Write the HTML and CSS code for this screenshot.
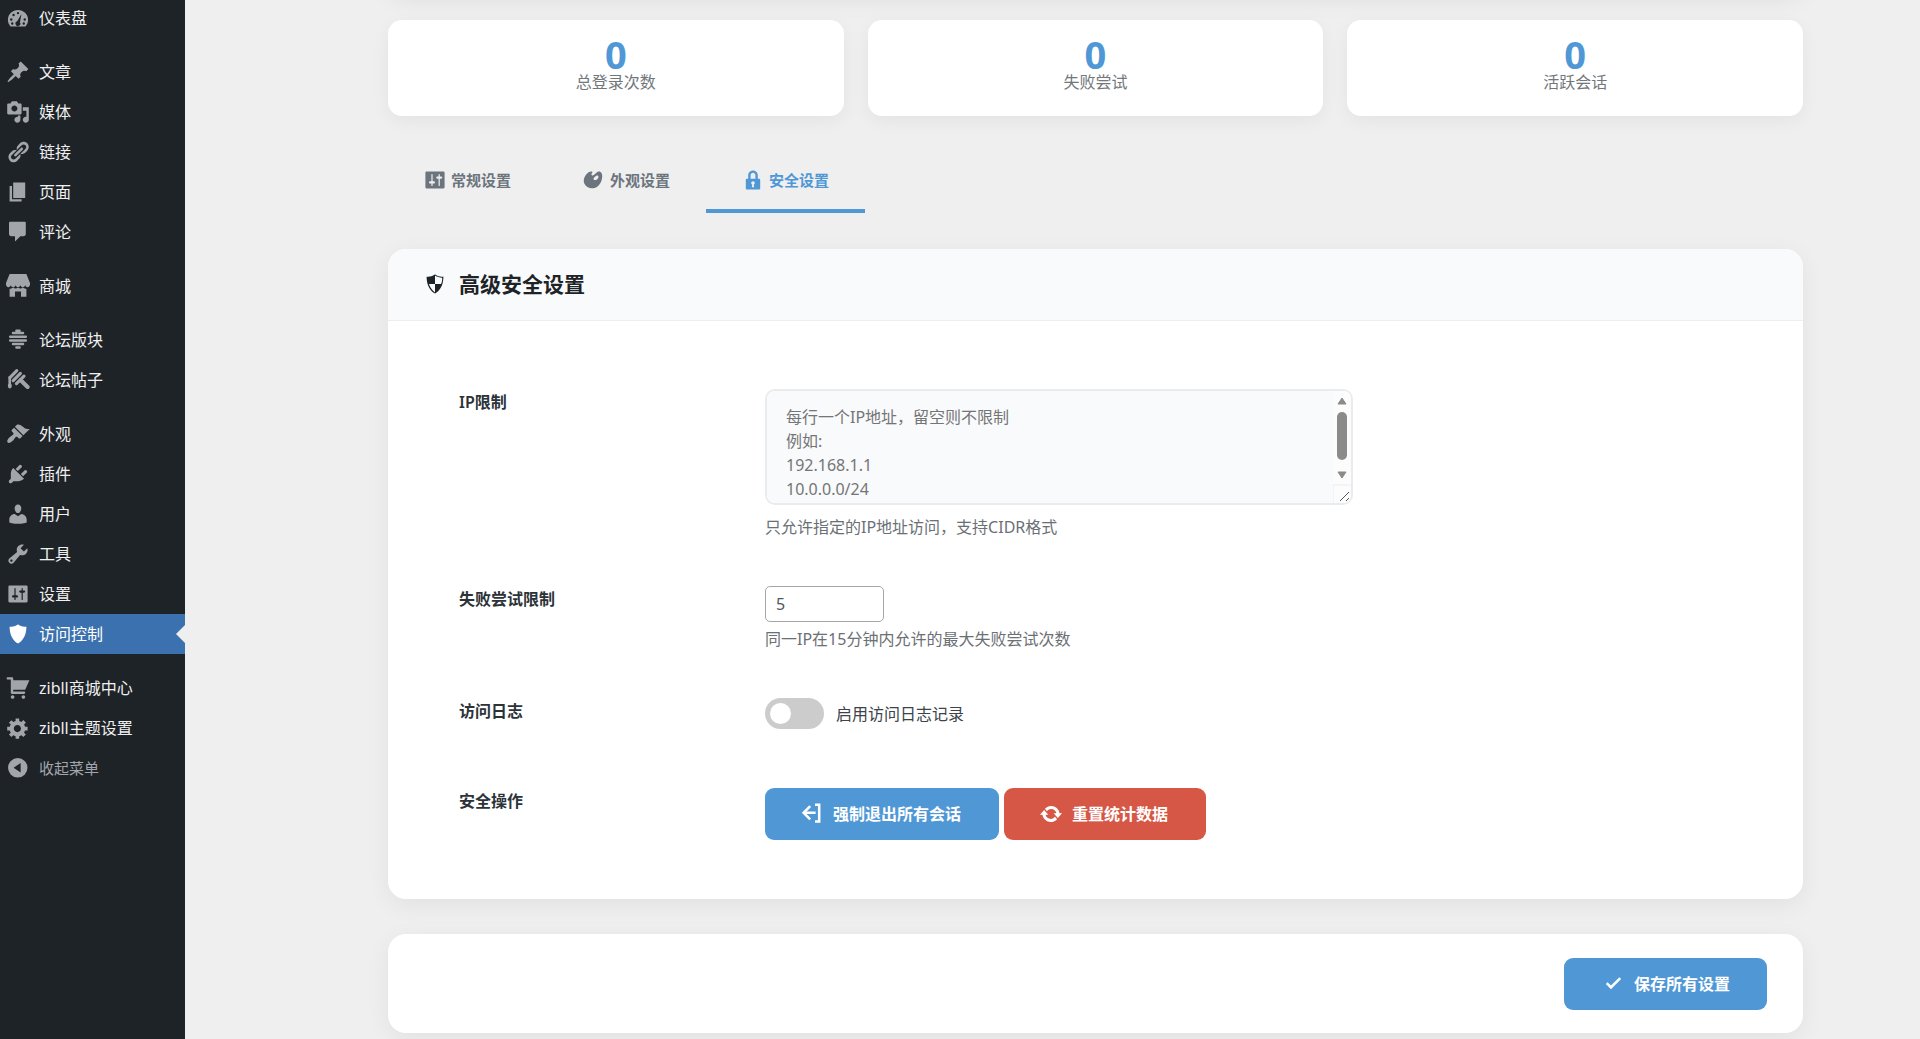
FILE: index.html
```html
<!DOCTYPE html>
<html lang="zh-CN">
<head>
  <meta charset="UTF-8" />
  <meta name="viewport" content="width=device-width, initial-scale=1.0" />
  <title>访问控制</title>
  <link rel="stylesheet" href="styles.css">
</head>
<body>
  <!-- Admin menu -->
  <nav class="sidebar">
    <ul class="menu">
      <li><a href="#"><svg viewBox="0 0 20 20"><path fill-rule="evenodd" d="M3.8 17C2.4 15.600 1.600 13.600 1.600 11.400 1.600 7 5.400 3.400 10 3.400s8.400 3.600 8.400 8c0 2.200-.8 4.200-2.200 5.600zM9 5.900a1 1 0 1 0 2 0 1 1 0 1 0-2 0zM5.300 7.500a1 1 0 1 0 2 0 1 1 0 1 0-2 0zM3.400 11.200a1 1 0 1 0 2 0 1 1 0 1 0-2 0zM14.600 11.200a1 1 0 1 0 2 0 1 1 0 1 0-2 0zM4.200 14.600a1 1 0 1 0 2 0 1 1 0 1 0-2 0zM13.800 14.600a1 1 0 1 0 2 0 1 1 0 1 0-2 0zM12.900 6.700l-3.600 6.100a2 2 0 1 0 2.300.8z"/></svg>仪表盘</a></li>
      <li class="gap"><a href="#"><svg viewBox="0 0 20 20"><path d="M10.44 3.02l1.82-1.82 6.36 6.35-1.83 1.82c-1.05-.68-2.48-.57-3.41.36l-.75.75c-.92.93-1.04 2.35-.35 3.41l-1.83 1.82-2.41-2.41-2.8 2.79c-.42.42-3.38 2.71-3.8 2.29s1.86-3.39 2.28-3.81l2.79-2.79L4.1 9.36l1.83-1.82c1.05.69 2.48.57 3.4-.36l.75-.75c.93-.92 1.05-2.35.36-3.41z"/></svg>文章</a></li>
      <li><a href="#"><svg viewBox="0 0 20 20"><path d="M13 11V4c0-.55-.45-1-1-1h-1.670L9 1H5L3.670 3H2c-.55 0-1 .45-1 1v7c0 .55.45 1 1 1h10c.55 0 1-.45 1-1zM7 4.500c1.380 0 2.500 1.120 2.500 2.500S8.380 9.500 7 9.500 4.500 8.380 4.500 7 5.620 4.500 7 4.500zM14 6h5v10.500c0 1.380-1.120 2.500-2.500 2.500S14 17.880 14 16.500s1.120-2.500 2.500-2.500c.17 0 .34.02.5.05V9h-3V6zm-4 8.050V13h2v3.500c0 1.380-1.120 2.500-2.500 2.500S7 17.880 7 16.500 8.120 14 9.500 14c.17 0 .34.02.5.05z"/></svg>媒体</a></li>
      <li><a href="#"><svg viewBox="0 0 20 20"><path d="M17.74 2.76c1.68 1.69 1.68 4.41 0 6.1l-1.53 1.52c-1.12 1.12-2.7 1.47-4.14 1.09l2.62-2.61.76-.77.76-.76c.84-.84.84-2.2 0-3.04-.84-.85-2.2-.85-3.04 0l-.77.76-3.38 3.38c-.37-1.44-.02-3.02 1.1-4.14l1.52-1.53c1.69-1.68 4.42-1.68 6.1 0zM8.59 13.43l5.34-5.34c.42-.42.42-1.1 0-1.52-.44-.43-1.13-.39-1.53 0l-5.33 5.34c-.42.42-.42 1.1 0 1.52.44.43 1.13.39 1.52 0zm-.76 2.29l4.14-4.15c.38 1.44.03 3.02-1.09 4.14l-1.52 1.53c-1.69 1.68-4.41 1.68-6.1 0-1.68-1.68-1.68-4.42 0-6.1l1.53-1.52c1.12-1.12 2.7-1.47 4.14-1.1l-4.14 4.15c-.85.84-.85 2.2 0 3.05.84.84 2.2.84 3.04 0z"/></svg>链接</a></li>
      <li><a href="#"><svg viewBox="0 0 20 20"><path d="M6 15V2h10v13H6zm-1 1h8v2H3V5h2v11z"/></svg>页面</a></li>
      <li><a href="#"><svg viewBox="0 0 20 20"><path d="M3.500 1.500h12c.6 0 1 .4 1 1v9c0 1-.6 2-2 2h-2.500l-4.500 4.500v-4.500h-3c-1.300 0-2-1-2-2v-9c0-.6.4-1 1-1z"/></svg>评论</a></li>
      <li class="gap"><a href="#"><svg viewBox="0 0 20 20"><path d="M3 0h14l3 7.500v1.300c0 1.200-.9 2.200-2 2.200s-2-.9-2-1.800c0 .9-.9 1.800-2 1.800s-2-.9-2-1.800c0 .9-.9 1.800-2 1.800s-2-.9-2-1.800c0 .9-.9 1.800-2 1.800s-2-.9-2-1.800c0 .9-.9 1.800-2 1.800s-2-1-2-2.200V7.500zM3 12.200c1.200.2 2.200-.2 3-.9 1.200 1.100 2.800 1.100 4 0 1.200 1.100 2.800 1.100 4 0 .8.700 1.800 1.100 3 .9V19h-4.500V14.500h-5V19H3z"/></svg>商城</a></li>
      <li class="gap"><a href="#"><svg viewBox="0 0 20 20"><path d="M8.700 2.200h2.600M5.800 4.100h8.400M3.500 7.300h13M3.500 10.400h13M5.800 13.400h8.400M8.700 16.200h2.600" fill="none" stroke="currentColor" stroke-width="2.100" stroke-linecap="round"/></svg>论坛版块</a></li>
      <li><a href="#"><svg viewBox="0 0 20 20"><path d="M9 2.200L3.300 8M12 4.500L6 10.500M15 6.800L8.700 13" fill="none" stroke="currentColor" stroke-width="2.600" stroke-linecap="round"/><path d="M12.300 10.200L18 15.800" fill="none" stroke="currentColor" stroke-width="3.400" stroke-linecap="round"/><path d="M2 7h2.200v6c1 1.600.8 4-.9 4-1.600 0-2.200-2-1.300-3.800z"/></svg>论坛帖子</a></li>
      <li class="gap"><a href="#"><svg viewBox="0 0 20 20"><path d="M14.48 11.06L7.41 3.99l1.5-1.5c.5-.56 2.3-.47 3.51.32 1.21.8 1.43 1.28 2.91 2.1 1.18.64 2.45 1.26 4.45.85zm-.71.71L6.7 4.7 4.93 6.47c-.39.39-.39 1.02 0 1.41l1.06 1.06c.39.39.39 1.03 0 1.42-.6.6-1.43 1.11-2.21 1.69-.35.26-.7.53-1.01.84C1.43 14.23.4 16.08 1.4 17.07c.99 1 2.84-.03 4.18-1.36.31-.31.58-.66.85-1.02.57-.78 1.08-1.61 1.69-2.21.39-.39 1.02-.39 1.41 0l1.06 1.06c.39.39 1.02.39 1.41 0z"/></svg>外观</a></li>
      <li><a href="#"><svg viewBox="0 0 20 20"><path d="M13.11 4.36L9.87 7.6 8 5.73l3.24-3.24c.35-.34 1.05-.2 1.56.32.52.51.66 1.21.31 1.55zm-8 1.77l.91-1.12 9.01 9.01-1.19.84c-.71.71-2.63 1.16-3.82 1.16H6.14L4.9 17.26c-.59.59-1.54.59-2.12 0-.59-.58-.59-1.53 0-2.12l1.24-1.24v-3.88c0-1.13.4-3.19 1.09-3.89zm7.26 3.97l3.24-3.24c.34-.35 1.04-.21 1.55.31.52.51.66 1.21.31 1.55l-3.24 3.25z"/></svg>插件</a></li>
      <li><a href="#"><svg viewBox="0 0 20 20"><path d="M10 9.250c-2.270 0-2.730-3.440-2.730-3.440C7 4.020 7.820 2 9.970 2c2.160 0 2.980 2.020 2.710 3.810 0 0-.41 3.440-2.680 3.440zm0 2.570L12.720 10c2.390 0 4.520 2.330 4.520 4.530v2.490s-3.650 1.130-7.240 1.130c-3.650 0-7.240-1.130-7.240-1.130v-2.490c0-2.250 1.940-4.480 4.470-4.480z"/></svg>用户</a></li>
      <li><a href="#"><svg viewBox="0 0 20 20"><path d="M16.68 9.77c-1.34 1.34-3.3 1.67-4.95.99l-5.41 6.52c-.99.99-2.59.99-3.58 0s-.99-2.59 0-3.57l6.52-5.42c-.68-1.65-.35-3.61.99-4.95 1.28-1.28 3.12-1.62 4.72-1.06l-2.89 2.89 2.82 2.82 2.86-2.87c.53 1.58.18 3.39-1.08 4.65zM3.81 16.21c.4.39 1.04.39 1.43 0 .4-.4.4-1.04 0-1.43-.39-.4-1.03-.4-1.43 0-.39.39-.39 1.03 0 1.43z"/></svg>工具</a></li>
      <li><a href="#"><svg viewBox="0 0 20 20"><path d="M18 16V4c0-.55-.45-1-1-1H3c-.55 0-1 .45-1 1v12c0 .55.45 1 1 1h14c.55 0 1-.45 1-1zM8 11h1c.55 0 1 .45 1 1s-.45 1-1 1H8v1.5c0 .28-.22.5-.5.5s-.5-.22-.5-.5V13H6c-.55 0-1-.45-1-1s.45-1 1-1h1V5.5c0-.28.22-.5.5-.5s.5.22.5.5V11zm5-2h-1c-.55 0-1-.45-1-1s.45-1 1-1h1V5.5c0-.28.22-.5.5-.5s.5.22.5.5V7h1c.55 0 1 .45 1 1s-.45 1-1 1h-1v5.5c0 .28-.22.5-.5.5s-.5-.22-.5-.5V9z"/></svg>设置</a></li>
      <li><a href="#" class="current"><svg viewBox="0 0 20 20"><path d="M10 2s3 2 7 2c0 11-7 14-7 14S3 15 3 4c4 0 7-2 7-2z"/></svg>访问控制</a></li>
      <li class="gap"><a href="#"><svg viewBox="0 0 20 20"><path d="M6 13h9c.55 0 1 .45 1 1s-.45 1-1 1H5c-.55 0-1-.45-1-1V3H1.500C.9 3 .5 2.600.5 2s.4-1 1-1H5c.55 0 1 .45 1 1v1.500h13.500L16 11.500H6zm-.5 3c.83 0 1.500.67 1.500 1.500S6.330 19 5.500 19 4 18.330 4 17.500 4.670 16 5.500 16zm9 0c.83 0 1.500.67 1.500 1.500s-.67 1.500-1.500 1.500-1.500-.67-1.500-1.500.67-1.500 1.500-1.500z"/></svg>zibll商城中心</a></li>
      <li><a href="#"><svg viewBox="0 0 20 20"><path d="M18 12h-2.180c-.17.7-.44 1.350-.81 1.930l1.540 1.540-2.100 2.100-1.540-1.540c-.58.36-1.230.63-1.910.79V19H8v-2.180c-.68-.16-1.330-.43-1.910-.79l-1.540 1.540-2.120-2.120 1.540-1.540c-.36-.58-.63-1.230-.79-1.910H1V9.030h2.170c.16-.7.44-1.350.8-1.940L2.430 5.550l2.100-2.100 1.540 1.540c.58-.37 1.240-.64 1.930-.81V2h3v2.180c.68.16 1.330.43 1.910.79l1.540-1.540 2.120 2.120-1.540 1.540c.36.59.64 1.240.8 1.940H18V12zm-8.500 1.500c1.660 0 3-1.340 3-3s-1.340-3-3-3-3 1.340-3 3 1.340 3 3 3z"/></svg>zibll主题设置</a></li>
      <li><button type="button" class="collapse"><svg viewBox="0 0 20 20"><path fill-rule="evenodd" d="M9.800 1.700a8.100 8.100 0 1 0 0 16.200 8.100 8.100 0 0 0 0-16.200zM12.200 5.800v8L6.300 9.800z"/></svg>收起菜单</button></li>
    </ul>
  </nav>

  <main class="content">
    <div class="wrap">
      <div class="page-header"></div>

      <!-- Stats -->
      <section class="stats">
        <div class="stat-card">
          <div class="stat-number">0</div>
          <div class="stat-label">总登录次数</div>
        </div>
        <div class="stat-card">
          <div class="stat-number">0</div>
          <div class="stat-label">失败尝试</div>
        </div>
        <div class="stat-card">
          <div class="stat-number">0</div>
          <div class="stat-label">活跃会话</div>
        </div>
      </section>

      <!-- Tabs -->
      <nav class="tabs">
        <a href="#general" class="tab"><svg viewBox="0 0 20 20"><path d="M18 16V4c0-.55-.45-1-1-1H3c-.55 0-1 .45-1 1v12c0 .55.45 1 1 1h14c.55 0 1-.45 1-1zM8 11h1c.55 0 1 .45 1 1s-.45 1-1 1H8v1.5c0 .28-.22.5-.5.5s-.5-.22-.5-.5V13H6c-.55 0-1-.45-1-1s.45-1 1-1h1V5.5c0-.28.22-.5.5-.5s.5.22.5.5V11zm5-2h-1c-.55 0-1-.45-1-1s.45-1 1-1h1V5.5c0-.28.22-.5.5-.5s.5.22.5.5V7h1c.55 0 1 .45 1 1s-.45 1-1 1h-1v5.5c0 .28-.22.5-.5.5s-.5-.22-.5-.5V9z"/></svg>常规设置</a>
        <a href="#appearance" class="tab"><svg viewBox="0 0 20 20"><path d="M8.55 3.06c1.01.34-1.95 2.01-.1 3.13 1.04.63 3.31-2.22 4.45-2.86.97-.54 2.67-.65 3.53 1.23 1.09 2.38.14 8.57-3.79 11.06-3.97 2.5-8.97 1.23-10.7-2.66-2.01-4.53 3.12-11.09 6.61-9.9zm1.21 6.45c.73 1.64 4.7-.5 3.79-2.8-.59-1.49-4.48 1.25-3.79 2.8z"/></svg>外观设置</a>
        <a href="#security" class="tab active"><svg viewBox="0 0 20 20"><path d="M14 9h1c.55 0 1 .45 1 1v7c0 .55-.45 1-1 1H5c-.55 0-1-.45-1-1v-7c0-.55.45-1 1-1h1V6c0-2.21 1.79-4 4-4s4 1.79 4 4v3zm-2 0V6c0-1.1-.9-2-2-2s-2 .9-2 2v3h4zm-1 7l-.36-2.15c.51-.24.86-.75.86-1.35 0-.83-.67-1.5-1.5-1.5s-1.5.67-1.5 1.5c0 .6.35 1.11.86 1.35L9 16h2z"/></svg>安全设置</a>
      </nav>

      <form>
        <!-- Security settings -->
        <section class="card" id="security">
          <h2 class="card-title"><svg viewBox="0 0 20 20"><path d="M10 2s3 2 7 2c0 11-7 14-7 14S3 15 3 4c4 0 7-2 7-2zm0 8h5s1-1 1-5c0 0-5-1-6-2v7H5c1 4 5 7 5 7v-7z"/></svg>高级安全设置</h2>
          <div class="card-body">
            <div class="row">
              <label class="row-label" for="ipLimit">IP限制</label>
              <div class="field">
                <div class="ip-wrap">
                  <textarea id="ipLimit" class="ip-box" placeholder="每行一个IP地址，留空则不限制&#10;例如:&#10;192.168.1.1&#10;10.0.0.0/24"></textarea>
                  <svg class="scrollbar" viewBox="0 0 18 112" aria-hidden="true">
                    <path d="M0 0h10q8 0 8 8v96q0 8-8 8H0z" fill="#fcfcfc"/>
                    <path d="M9 7l4 6H5zM9 87l4-6H5z" fill="#8b8b8b" stroke="#8b8b8b" stroke-linejoin="round"/>
                    <rect x="4" y="21" width="10" height="48" rx="5" fill="#8b8b8b"/>
                    <path d="M0 112V94h18" fill="none" stroke="#e9ecef"/>
                    <path d="M7 110l9-9M13 110l3-3" fill="none" stroke="#555"/>
                  </svg>
                </div>
                <p class="help">只允许指定的IP地址访问，支持CIDR格式</p>
              </div>
            </div>
            <div class="row">
              <label class="row-label" for="maxFail">失败尝试限制</label>
              <div class="field">
                <input type="number" id="maxFail" class="number" value="5" min="1">
                <p class="help near">同一IP在15分钟内允许的最大失败尝试次数</p>
              </div>
            </div>
            <div class="row row-toggle">
              <span class="row-label">访问日志</span>
              <label class="toggle"><input type="checkbox" class="switch">启用访问日志记录</label>
            </div>
            <div class="row">
              <span class="row-label">安全操作</span>
              <div class="actions">
                <button type="button" class="btn"><svg viewBox="0 0 20 20"><path d="M8.500 3.500L3 9l5.500 5.500M3.500 9H13M12.500 2.200h3.500v14h-3.500" fill="none" stroke="currentColor" stroke-width="2.100"/></svg>强制退出所有会话</button>
                <button type="button" class="btn danger"><svg viewBox="0 0 20 20"><path d="M10.2 3.28c3.53 0 6.43 2.61 6.92 6h2.08l-3.5 4-3.5-4h2.32c-.45-1.97-2.21-3.45-4.32-3.45-1.45 0-2.73.71-3.54 1.78L4.95 5.66C6.23 4.2 8.11 3.28 10.2 3.28zm-.4 13.44c-3.52 0-6.43-2.61-6.92-6H.8l3.5-4c1.17 1.33 2.33 2.67 3.5 4H5.48c.45 1.97 2.21 3.45 4.32 3.45 1.45 0 2.73-.71 3.54-1.78l1.71 1.95c-1.28 1.46-3.15 2.38-5.25 2.38z"/></svg>重置统计数据</button>
              </div>
            </div>
          </div>
        </section>

        <!-- Save -->
        <div class="card save-bar">
          <button type="submit" class="btn"><svg viewBox="0 0 20 20"><path d="M15.300 4.300l-7 7-2.800-2.800-1.500 1.500 4.300 4.300 8.500-8.500z"/></svg>保存所有设置</button>
        </div>
      </form>
    </div>
  </main>
</body>
</html>
```

FILE: styles.css
```css
* { margin: 0; padding: 0; box-sizing: border-box; }
body {
  display: flex;
  height: 100vh;
  overflow: hidden;
  font-family: "Noto Sans", "Noto Sans CJK SC", sans-serif;
  font-size: 16px;
  line-height: 24px;
  color: #3c434a;
  background: #efefef;
}
svg {
  width: 24px;
  height: 24px;
  flex: none;
  fill: currentColor;
}
button, input, textarea {
  font: inherit;
}

/* Sidebar */
.sidebar {
  width: 185px;
  flex: none;
  background: #1e2328;
}
.menu {
  list-style: none;
  margin-top: -2px;
}
.menu .gap {
  margin-top: 14px;
}
.menu a, .collapse {
  position: relative;
  display: flex;
  align-items: center;
  gap: 9px;
  width: 100%;
  height: 40px;
  padding-left: 6px;
  color: #f0f0f1;
  text-decoration: none;
}
.menu svg {
  color: #a2a6aa;
}
.menu .current {
  background: #3a71ae;
  color: #fff;
}
.menu .current svg {
  color: #fff;
}
.menu .current::after {
  content: "";
  position: absolute;
  right: 0;
  top: 11px;
  border: 9px solid transparent;
  border-left: none;
  border-right-color: #efefef;
}
.menu .collapse {
  background: none;
  border: none;
  font-size: 15px;
  color: #a2a6aa;
  cursor: pointer;
}

/* Content */
.content {
  flex: 1;
  min-width: 0;
  padding: 0 24px 0 110px;
}
.wrap {
  max-width: 1415px;
  margin: 0 auto;
}
.page-header {
  height: 60px;
  margin: -68px 0 28px;
  border-radius: 18px;
  box-shadow: 0 6px 24px rgba(0, 0, 0, 0.08);
}
.stats {
  display: grid;
  grid-template-columns: repeat(3, 1fr);
  gap: 24px;
}
.stat-card {
  padding: 16px 24px 24px;
  background: #fff;
  border-radius: 14px;
  box-shadow: 0 5px 18px rgba(0, 0, 0, 0.05);
  text-align: center;
}
.stat-number {
  font-size: 38px;
  line-height: 36px;
  font-weight: 700;
  color: #5097d6;
}
.stat-label {
  line-height: 20px;
  color: #72777c;
}

.tabs {
  display: flex;
  margin: 35px 0 36px;
}
.tab {
  display: flex;
  align-items: center;
  gap: 4px;
  padding: 17px 36px 17px 35px;
  border-bottom: 4px solid transparent;
  font-size: 15px;
  font-weight: 600;
  color: #6c757d;
  text-decoration: none;
}
.tab.active {
  color: #5097d6;
  border-bottom-color: #5097d6;
}

.card {
  background: #fff;
  border-radius: 18px;
  box-shadow: 0 6px 24px rgba(0, 0, 0, 0.06);
  overflow: hidden;
}
.card-title {
  display: flex;
  align-items: center;
  gap: 12px;
  padding: 23px 35px 24px;
  background: #f8fafc;
  border-bottom: 1px solid #eceff1;
  font-size: 21px;
  line-height: 24px;
  font-weight: 600;
  color: #1d2327;
}
.card-body {
  display: flex;
  flex-direction: column;
  gap: 49px;
  padding: 68px 71px 59px;
}
.row {
  display: flex;
  align-items: flex-start;
}
.row-label {
  width: 306px;
  flex: none;
  padding-top: 1px;
  font-weight: 600;
  color: #2c3338;
}
.field {
  flex: 1;
}
.ip-wrap {
  position: relative;
  max-width: 588px;
}
.ip-box {
  display: block;
  width: 100%;
  height: 116px;
  padding: 14px 19px;
  border: 2px solid #e9ecef;
  border-radius: 10px;
  background: #f8fafc;
  resize: none;
  scrollbar-width: none;
}
.ip-box::placeholder {
  color: #757575;
}
.scrollbar {
  position: absolute;
  top: 2px;
  right: 2px;
  width: 18px;
  height: 112px;
}
.help {
  margin-top: 12px;
  line-height: 20px;
  color: #6b7075;
}
.help.near {
  margin-top: 7px;
}
.number {
  display: block;
  width: 119px;
  height: 36px;
  padding: 0 10px;
  border: 1px solid #a5a7aa;
  border-radius: 5px;
  color: #50575e;
  appearance: textfield;
}
.row-toggle {
  padding-bottom: 10px;
}
.toggle {
  display: flex;
  align-items: center;
  gap: 12px;
}
.switch {
  appearance: none;
  width: 59px;
  height: 31px;
  padding: 5px;
  border-radius: 16px;
  background: #ccc;
  cursor: pointer;
}
.switch::before {
  content: "";
  display: block;
  width: 21px;
  height: 21px;
  border-radius: 50%;
  background: #fff;
}
.switch:checked {
  background: #5097d6;
}
.switch:checked::before {
  margin-left: auto;
}
.actions {
  display: flex;
  gap: 5px;
}
.btn {
  display: flex;
  align-items: center;
  gap: 9px;
  height: 52px;
  padding: 0 36px 0 35px;
  border: none;
  border-radius: 9px;
  background: #5097d6;
  color: #fff;
  font-weight: 700;
  cursor: pointer;
}
.actions .btn {
  padding-right: 38px;
}
.btn.danger {
  background: #d65745;
}
.save-bar {
  display: flex;
  justify-content: flex-end;
  margin-top: 35px;
  padding: 24px 36px 23px;
}
.save-bar .btn {
  padding: 0 37px;
}
```
